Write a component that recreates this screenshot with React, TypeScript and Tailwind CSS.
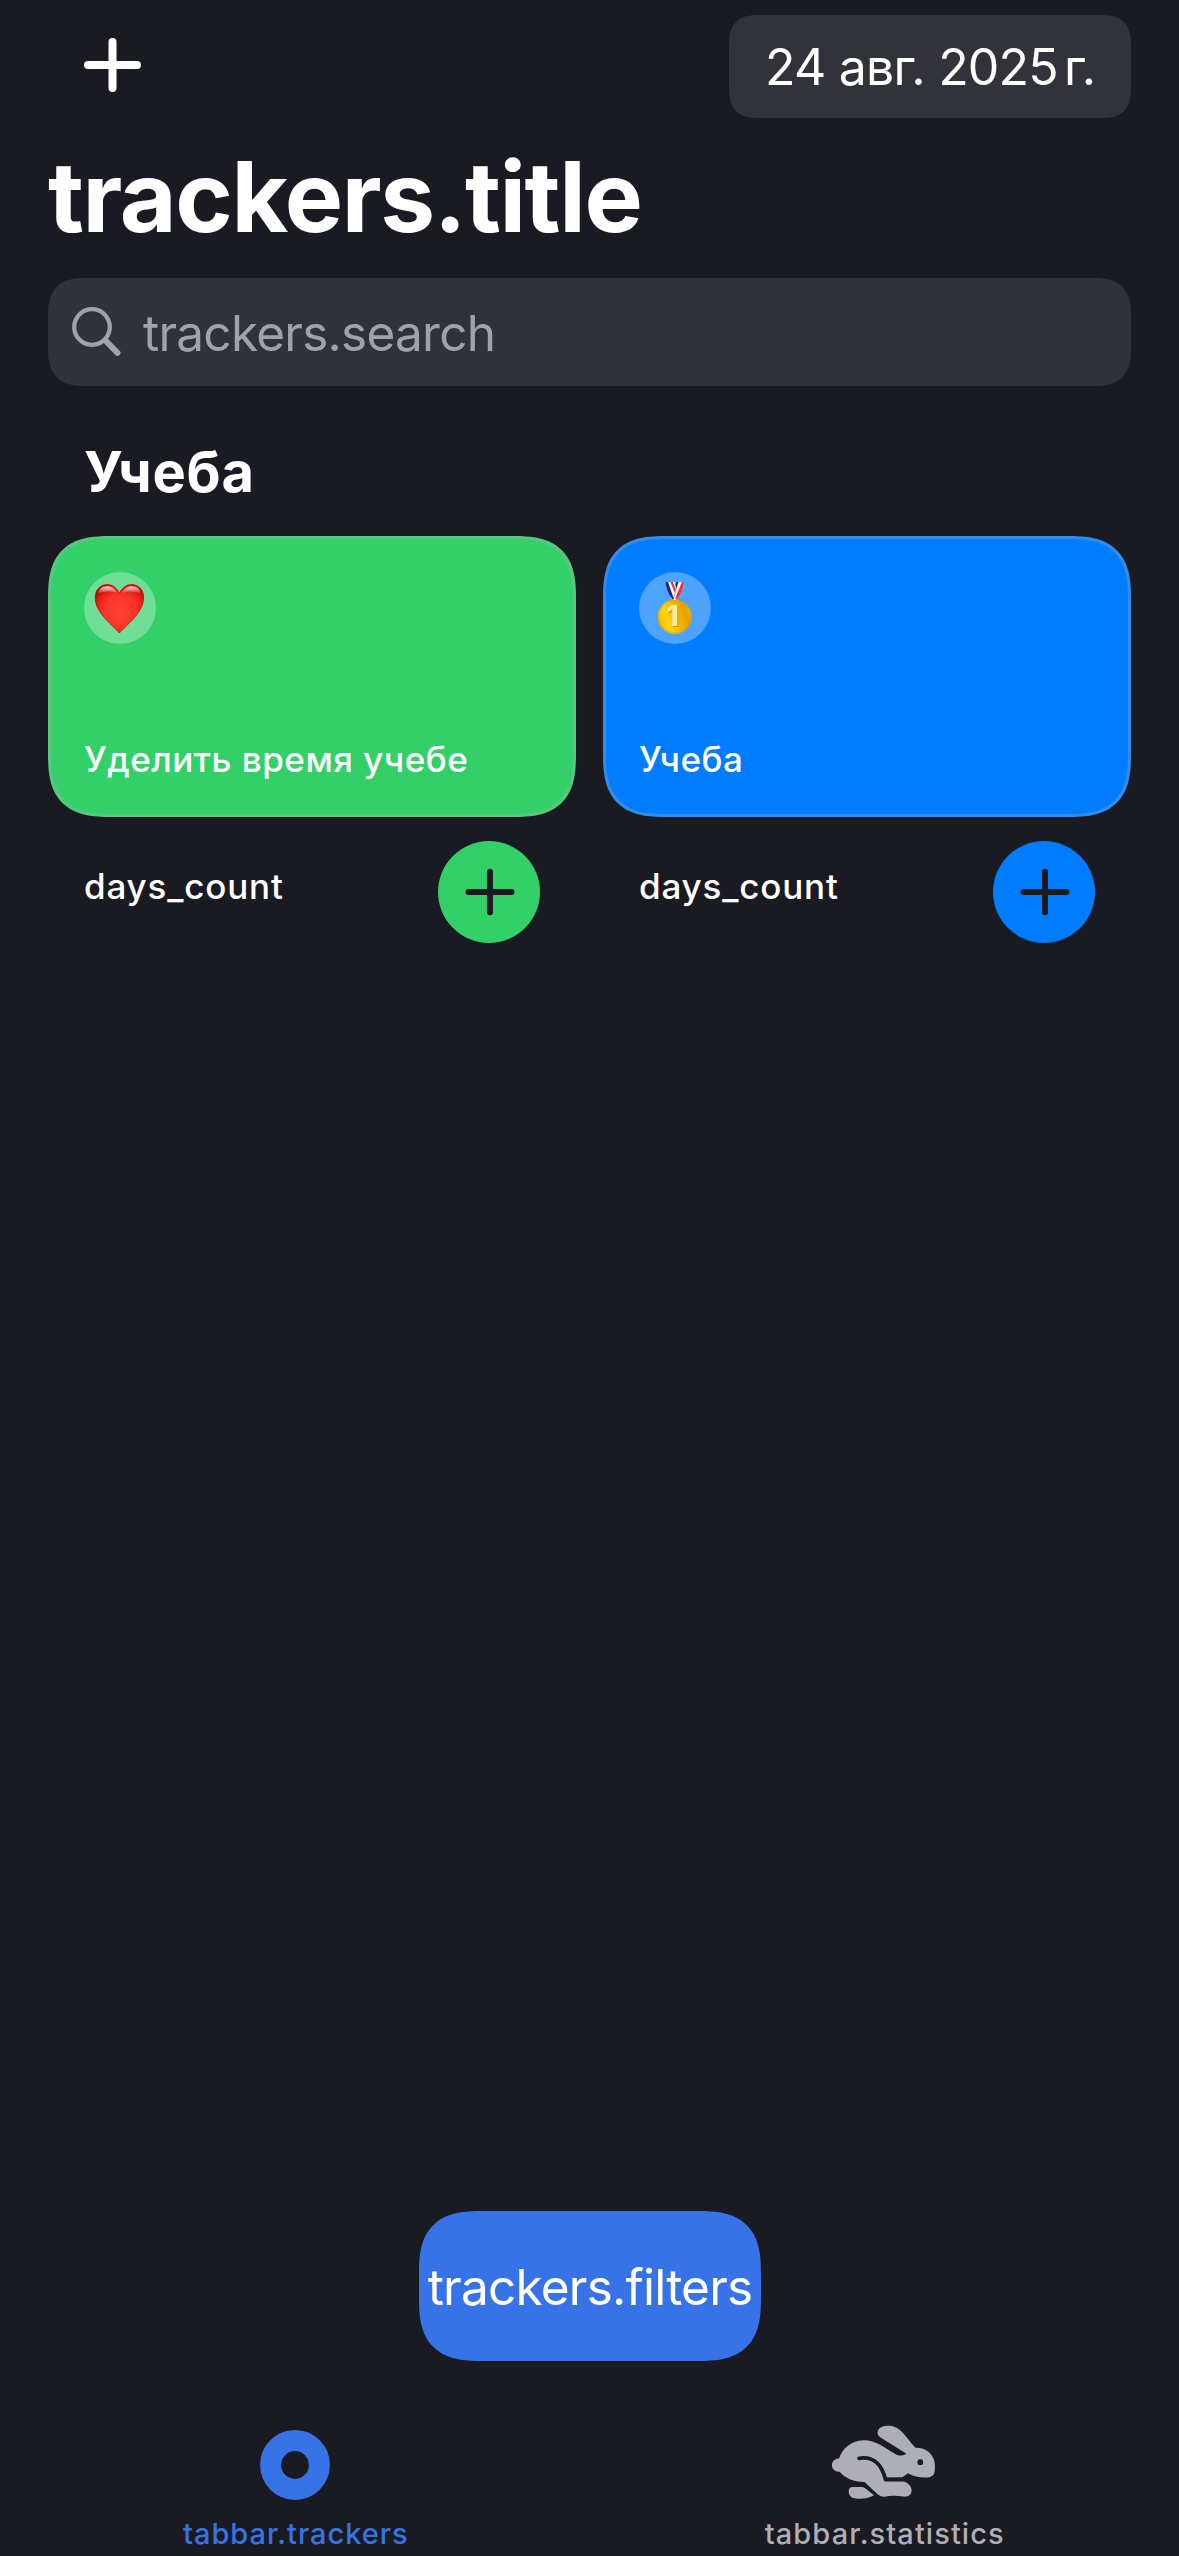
const BG = "#1A1B22";

function PlusIcon({ className, width }: { className: string; width: number }) {
  return (
    <svg className={className} viewBox="0 0 57 54" fill="none" stroke="currentColor" strokeWidth={width} strokeLinecap="round">
      <path d="M4 27H53M28.5 4V50" />
    </svg>
  );
}

function SearchIcon() {
  return (
    <svg className="h-[50px] w-[50px] text-[#A1A1AC]" viewBox="0 0 50 50" fill="none" stroke="currentColor">
      <circle cx="20" cy="20" r="17.8" strokeWidth="4.3" />
      <path d="M33.5 33.5L45.5 45.8" strokeWidth="6" strokeLinecap="round" />
    </svg>
  );
}

function HeartIcon() {
  return (
    <svg className="h-[72px] w-[72px]" viewBox="0 0 72 72">
      <defs>
        <radialGradient id="heart" cx="0.52" cy="0.55" r="0.6">
          <stop offset="0" stopColor="#FF4534" />
          <stop offset="0.6" stopColor="#FB3127" />
          <stop offset="0.85" stopColor="#E21B14" />
          <stop offset="1" stopColor="#B80B08" />
        </radialGradient>
        <linearGradient id="shine" x1="0" y1="0" x2="0" y2="1">
          <stop offset="0" stopColor="#fff" stopOpacity="0.85" />
          <stop offset="1" stopColor="#fff" stopOpacity="0" />
        </linearGradient>
      </defs>
      <path
        d="M35.4 61C30 54 11.2 41.5 11.2 25.6C11.2 17.5 16.5 12.6 23 12.6C28.6 12.6 33 16 35.4 21.4C37.8 16 42.2 12.6 47.8 12.6C54.3 12.6 59.6 17.5 59.6 25.6C59.6 41.5 40.8 54 35.4 61Z"
        fill="url(#heart)"
        stroke="#C9100C"
        strokeWidth="0.9"
      />
      <path d="M14 22C14.5 17 18 14.2 23 14.2C28 14.2 31 16.8 33 21C29 19 19 18.5 14 22Z" fill="url(#shine)" />
      <path d="M38 21C40 16.8 43 14.2 48 14.2C53 14.2 56.5 17 57 22C52 18.5 42 19 38 21Z" fill="url(#shine)" />
    </svg>
  );
}

function MedalIcon() {
  return (
    <svg className="h-[72px] w-[72px]" viewBox="0 0 72 72">
      <defs>
        <linearGradient id="gold" x1="0" y1="0.7" x2="1" y2="0.4">
          <stop offset="0" stopColor="#F2B900" />
          <stop offset="0.3" stopColor="#FFD60A" />
          <stop offset="0.6" stopColor="#F2B400" />
          <stop offset="0.85" stopColor="#E79F00" />
          <stop offset="1" stopColor="#F3B80C" />
        </linearGradient>
      </defs>
      <path d="M45 10H36.5L31.5 27H37.5C42 23 44.5 17 45 10Z" fill="#fff" />
      <path d="M45 10H42.8L36 27H38C42 22.5 44.5 17 45 10Z" fill="#F0323C" />
      <path d="M39.5 10H37L32.5 24L34.5 27Z" fill="#1C2A8C" />
      <path d="M26.5 10H35.5L37.5 17L34 27H33C29 22 27 16 26.5 10Z" fill="#fff" />
      <path d="M26.5 10H29L35 27H33C29 22 27 16 26.5 10Z" fill="#1C2A8C" />
      <path d="M31.3 10H33.8L37 18L36 21Z" fill="#F0323C" />
      <circle cx="36" cy="28" r="1.8" fill="#F4E3A0" />
      <circle cx="35.7" cy="44.7" r="17" fill="url(#gold)" />
      <circle cx="35.7" cy="44.7" r="16.2" fill="none" stroke="#D99500" strokeWidth="1" opacity="0.6" />
      <text x="34.5" y="54.8" textAnchor="middle" fontFamily="Inter, sans-serif" fontWeight="800" fontSize="28" fill="#C98A00">1</text>
      <text x="33.8" y="54" textAnchor="middle" fontFamily="Inter, sans-serif" fontWeight="800" fontSize="28" fill="#FBEB9C">1</text>
    </svg>
  );
}

function RingIcon() {
  return (
    <svg className="h-[82px] w-[110px]" viewBox="0 0 110 82">
      <circle cx="55" cy="43" r="24.4" fill="none" stroke="currentColor" strokeWidth="21" />
    </svg>
  );
}

function RabbitIcon() {
  return (
    <svg className="h-[82px] w-[110px]" viewBox="29 22 110 82">
      <circle cx="38.5" cy="65.2" r="6.6" fill="currentColor" />
      <path
        d="M38.5 60C42 48 52 40.3 63 40.2C76 40 85 48 94 53.3C98 56 102 56.5 106.5 53.8L80.5 37.5C76 34.5 77 29 81.5 27C88 24.5 96 25.5 102 32C108 38.5 111 43 115.5 47.8C124 47.5 131 51.5 134 60C135.5 64 135.3 72.5 133.5 74.7C130 79 117 78.5 108 73.3L102 77.5L86.5 77.8L85.5 81.2C92 80 100 79.8 104 81.5C113.5 85 113.5 94.5 107.5 96.2C101 97.5 94 94.5 86 96.6C82 97.3 80 96.3 77 93.8L64.5 82C53 82 44 77.5 39 71Z"
        fill="currentColor"
      />
      <path d="M59 58.3C74 56 81.5 64 85.5 79.5H103" fill="none" stroke={BG} strokeWidth="3.8" strokeLinecap="round" strokeLinejoin="round" />
      <circle cx="120.3" cy="62.2" r="2.9" fill={BG} />
      <path d="M51.5 87H62Q64 87 65.5 88.5L74 95.3C68 99 58 99.5 53 98C47.5 96 47.5 88 51.5 87Z" fill="currentColor" />
    </svg>
  );
}

interface Tracker {
  title: string;
  icon: React.ReactNode;
  fill: string;
}

const trackers: Tracker[] = [
  { title: "Уделить время учебе", icon: <HeartIcon />, fill: "bg-[#33D069]" },
  { title: "Учеба", icon: <MedalIcon />, fill: "bg-[#007CFF]" },
];

function TrackerCard({ title, icon, fill }: Tracker) {
  return (
    <div className="flex flex-col text-[35px] font-medium leading-[48px]">
      <div
        className={`flex h-[281px] flex-col items-start justify-between rounded-[63px] border-[3px] border-[#AEAFB44D] pt-[33px] pb-[31px] pl-[33px] [corner-shape:superellipse(1.44)] ${fill}`}
      >
        <div className="h-[72px] w-[72px] rounded-full bg-white/30">{icon}</div>
        <p className="tracking-[0.5px] whitespace-nowrap">{title}</p>
      </div>
      <div className="mt-6 flex items-start justify-between px-9">
        <p className="mt-[21px] tracking-[0.82px]">days_count</p>
        <button className={`flex h-[102px] w-[102px] items-center justify-center rounded-full pl-[2px] text-[#1A1B22] ${fill}`}>
          <PlusIcon className="h-[50px] w-[50px]" width={6.8} />
        </button>
      </div>
    </div>
  );
}

export default function App() {
  return (
    <div className="flex h-[2556px] w-[1179px] flex-col overflow-hidden bg-[#1A1B22] px-12 pt-[15px] font-[Inter,sans-serif] text-white">
      <header className="flex items-start justify-between">
        <PlusIcon className="mt-[23px] ml-9 h-[54px] w-[57px]" width={8} />
        <div className="flex h-[103px] w-[402px] items-center rounded-[31px] bg-[#32323A] pt-0.5 pl-[36px] text-[50px] tracking-[-0.8px] whitespace-nowrap [corner-shape:superellipse(1.44)]">
          24 авг. 2025<span className="-ml-[3px]">{"\u202f"}г.</span>
        </div>
      </header>

      <h1 className="mt-[19px] text-[98px] leading-[120px] font-bold tracking-[-1.4px]">trackers.title</h1>

      <div className="mt-[21px] flex h-[108px] items-center gap-[21px] rounded-[39px] bg-[#31313A] pl-6 [corner-shape:superellipse(1.44)]">
        <SearchIcon />
        <span className="pt-0.5 text-[49.5px] tracking-[-0.75px] text-[#A1A1AC]">trackers.search</span>
      </div>

      <h2 className="mt-[53px] ml-[36px] text-[56px] leading-[66px] font-bold tracking-[0.8px]">Учеба</h2>

      <div className="mt-[31px] grid grid-cols-2 gap-[27px]">
        {trackers.map((t) => (
          <TrackerCard key={t.title} {...t} />
        ))}
      </div>

      <div className="flex-1" />

      <button className="flex h-[150px] w-[342px] items-center justify-center self-center rounded-[63px] bg-[#3772E7] pt-0.5 pl-px text-[49.5px] tracking-[-0.78px] [corner-shape:superellipse(1.44)]">
        trackers.filters
      </button>

      <nav className="-mx-12 mt-[61px] grid grid-cols-2 pb-1 text-[29px] leading-9 font-medium">
        <div className="flex flex-col items-center gap-3 text-[#3772E7]">
          <RingIcon />
          <span className="pl-0.5 tracking-[0.98px]">tabbar.trackers</span>
        </div>
        <div className="flex flex-col items-center gap-3 text-[#AEAFB4]">
          <RabbitIcon />
          <span className="pl-px tracking-[1.08px]">tabbar.statistics</span>
        </div>
      </nav>
    </div>
  );
}
